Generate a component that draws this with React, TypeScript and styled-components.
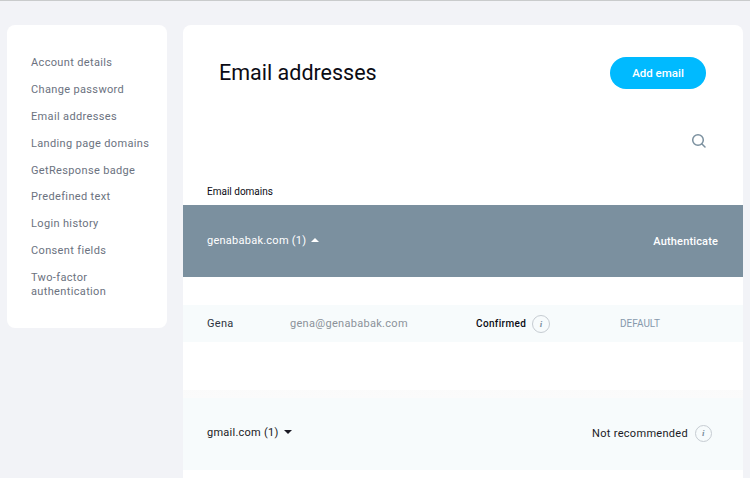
import React from "react";
import styled, { createGlobalStyle } from "styled-components";

const Global = createGlobalStyle`
  html, body { margin: 0; padding: 0; height: 100%; overflow: hidden; background: #f2f3f7; }
  body { font-family: Roboto, "Liberation Sans", sans-serif; }
`;
const Page = styled.div`
  box-sizing: border-box;
  width: 750px;
  height: 478px;
  overflow: hidden;
  border-top: 1px solid #c9cbcc;
  padding: 24px 7px 0;
  display: flex;
  align-items: flex-start;
  gap: 16px;
`;
const Sidebar = styled.nav`
  box-sizing: border-box;
  width: 160px;
  height: 303px;
  flex: none;
  background: #fff;
  border-radius: 8px;
  padding: 31px 10px 0 24px;
  display: flex;
  flex-direction: column;
`;
const NavItem = styled.a`
  display: block;
  font-size: 11px;
  line-height: 14px;
  letter-spacing: 0.35px;
  color: #6b7280;
  margin-bottom: 12.875px;
`;
const Main = styled.main`
  width: 560px;
  flex: none;
  height: 460px;
  background: #fff;
  border-radius: 8px 8px 0 0;
  display: flex;
  flex-direction: column;
`;
const Header = styled.header`
  height: 74px;
  flex: none;
  padding: 32px 37px 0 36px;
  display: flex;
  align-items: flex-start;
  justify-content: space-between;
`;
const Title = styled.h1`
  margin: 0;
  font-size: 21.5px;
  line-height: 32px;
  font-weight: 400;
  color: #0b0b14;
`;
const AddButton = styled.button`
  width: 96px;
  height: 32px;
  border: 0;
  padding: 0;
  border-radius: 16px;
  background: #00baff;
  color: #fff;
  font: 500 11.5px Roboto, sans-serif;
`;
const SearchRow = styled.div`
  height: 20px;
  flex: none;
  padding-right: 36px;
  display: flex;
  justify-content: flex-end;
  align-items: center;
  color: #7b909f;
`;
const DomainsLabel = styled.div`
  margin-top: 34px;
  padding-left: 24px;
  height: 20px;
  flex: none;
  font-size: 10px;
  line-height: 14px;
  color: #0b0b14;
`;
const Band = styled.div<{ $active?: boolean }>`
  height: 72px;
  flex: none;
  padding: 0 25px 0 24px;
  display: flex;
  align-items: center;
  justify-content: space-between;
  font-size: 11px;
  letter-spacing: 0.25px;
  background: ${p => (p.$active ? "#7b909f" : "#f7fbfc")};
  color: ${p => (p.$active ? "#fff" : "#1a1a24")};
`;
const DomainName = styled.div<{ $lift: number }>`
  display: flex;
  align-items: center;
  gap: 5px;
  margin-top: ${p => p.$lift}px;
`;
const Caret = styled.span<{ $up?: boolean }>`
  width: 0;
  height: 0;
  border-left: 4px solid transparent;
  border-right: 4px solid transparent;
  ${p => (p.$up ? "border-bottom: 4px solid currentColor;" : "border-top: 4px solid currentColor;")}
`;
const Authenticate = styled.span`
  font-weight: 500;
  font-size: 11px;
  letter-spacing: 0.15px;
`;
const AddressRow = styled.div`
  margin-top: 28px;
  height: 37px;
  flex: none;
  background: #f7fbfc;
  display: grid;
  grid-template-columns: 83px 186px 144px 1fr;
  align-items: center;
  padding-left: 24px;
  font-size: 11px;
  letter-spacing: 0.3px;
`;
const Name = styled.span`
  color: #2e3440;
`;
const Address = styled.span`
  color: #8b929a;
`;
const Status = styled.span`
  display: flex;
  align-items: center;
  gap: 6px;
  font-size: 10px;
  font-weight: 500;
  letter-spacing: 0.35px;
  color: #0b0b14;
`;
const DefaultTag = styled.span`
  font-size: 10px;
  letter-spacing: 0;
  color: #8699ac;
`;
const InfoBadge = styled.span<{ $size: number }>`
  box-sizing: border-box;
  width: ${p => p.$size}px;
  height: ${p => p.$size}px;
  border-radius: 50%;
  border: 1px solid #c6ccd2;
  display: inline-flex;
  align-items: center;
  justify-content: center;
  font: italic 700 9px "Liberation Serif", serif;
  color: #7b909f;
`;
const Spacer = styled.div`
  height: 48px;
  flex: none;
  padding-bottom: 8px;
  background: linear-gradient(#fff, #fff) top / 100% 48px no-repeat, linear-gradient(#f7f7f8, #fbfbfb);
`;
const Warning = styled.span`
  display: flex;
  align-items: center;
  gap: 7px;
  font-size: 11px;
  letter-spacing: 0.3px;
  color: #1a1a24;
  margin: -2px 6px 0 0;
`;

const SearchIcon = () => (
  <svg width="16" height="16" viewBox="0 0 16 16" fill="none" stroke="currentColor" strokeWidth="1.5">
    <circle cx="7" cy="7" r="5.3" />
    <path d="M11 11l3 3" strokeLinecap="round" />
  </svg>
);

const links = [
  "Account details", "Change password", "Email addresses", "Landing page domains",
  "GetResponse badge", "Predefined text", "Login history", "Consent fields", "Two-factor authentication",
];

export default function App() {
  return (
    <Page>
      <Global />
      <Sidebar>
        {links.map(l => <NavItem key={l}>{l}</NavItem>)}
      </Sidebar>
      <Main>
        <Header>
          <Title>Email addresses</Title>
          <AddButton>Add email</AddButton>
        </Header>
        <SearchRow><SearchIcon /></SearchRow>
        <DomainsLabel>Email domains</DomainsLabel>
        <Band $active>
          <DomainName $lift={-2}>genababak.com (1) <Caret $up /></DomainName>
          <Authenticate>Authenticate</Authenticate>
        </Band>
        <AddressRow>
          <Name>Gena</Name>
          <Address>gena@genababak.com</Address>
          <Status>Confirmed <InfoBadge $size={18}>i</InfoBadge></Status>
          <DefaultTag>DEFAULT</DefaultTag>
        </AddressRow>
        <Spacer />
        <Band>
          <DomainName $lift={-4}>gmail.com (1) <Caret /></DomainName>
          <Warning>Not recommended <InfoBadge $size={17}>i</InfoBadge></Warning>
        </Band>
      </Main>
    </Page>
  );
}
